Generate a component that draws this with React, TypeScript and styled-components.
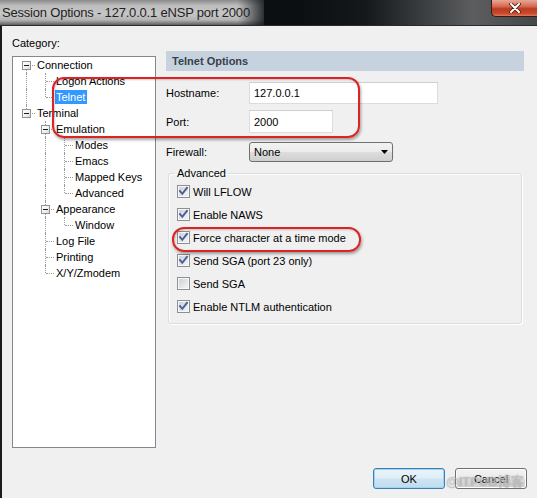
import React from "react";
import styled, { createGlobalStyle } from "styled-components";

const Global = createGlobalStyle`
  html, body { margin: 0; padding: 0; }
  body {
    width: 537px; height: 498px; overflow: hidden; background: #f0f0f0;
    font-family: "Liberation Sans", Arial, sans-serif;
  }
`;

const Window = styled.div`
  position: relative;
  width: 537px;
  height: 498px;
  display: flex;
  flex-direction: column;
  overflow: hidden;
`;

const TitleBar = styled.div`
  flex: none;
  height: 25px;
  display: flex;
  justify-content: space-between;
  align-items: stretch;
  background: linear-gradient(to right, #121519 0%, #0c0f12 55%, #15181b 68%, #3f4244 80%, #5b5d5f 88%, #45484a 100%);
  border-bottom: 1px solid #2b2b2b;
`;

const TitleText = styled.span`
  display: flex;
  align-items: center;
  padding: 0 14px 0 2px;
  font-size: 13px;
  letter-spacing: -0.2px;
  color: #1f2222;
  background:
    linear-gradient(to right, rgba(18,21,25,0) 0%, rgba(18,21,25,0) 90%, rgba(18,21,25,0.85) 100%),
    linear-gradient(to bottom, #8a8a8a 0%, #bdbdbd 22%, #c6c6c6 55%, #b4b4b4 80%, #5e5e5e 100%);
`;

const CloseButton = styled.div`
  width: 46px;
  height: 17px;
  box-sizing: border-box;
  display: flex;
  align-items: center;
  justify-content: center;
  border: 1px solid #3b1a12;
  border-top: none;
  border-right: none;
  border-radius: 0 0 0 5px;
  background: linear-gradient(to bottom, #e6a796 0%, #d56a50 40%, #bd3a20 55%, #c84a2e 85%, #e07a5a 100%);
`;

const Body = styled.div`
  flex: 1;
  display: flex;
  flex-direction: column;
  padding-left: 10px;
  border-left: 2px solid #1b1b1b;
  background: #f0f0f0;
  font-size: 11px;
  color: #000;
`;

const CategoryLabel = styled.div`
  margin-top: 10px;
  height: 14px;
  line-height: 14px;
`;

const MainRow = styled.div`
  display: flex;
  align-items: flex-start;
`;

const Tree = styled.div`
  margin-top: 6px;
  width: 144px;
  height: 392px;
  box-sizing: border-box;
  border: 1px solid #828790;
  background: #fff;
  padding-left: 4px;
`;

const TreeRow = styled.div`
  display: flex;
  align-items: center;
  height: 16px;
`;

const dots = "1px dotted #9a9a9a";

const Guide = styled.span<{ $line: boolean }>`
  position: relative;
  flex: none;
  width: 19px;
  height: 16px;
  &::before {
    content: "";
    display: ${(p) => (p.$line ? "block" : "none")};
    position: absolute;
    left: 9px;
    top: 0;
    bottom: 0;
    border-left: ${dots};
  }
`;

const Connector = styled.span<{ $up: boolean; $down: boolean }>`
  position: relative;
  flex: none;
  width: 19px;
  height: 16px;
  &::before {
    content: "";
    position: absolute;
    left: 9px;
    top: ${(p) => (p.$up ? 0 : 8)}px;
    bottom: ${(p) => (p.$down ? 0 : 8)}px;
    border-left: ${dots};
  }
  &::after {
    content: "";
    position: absolute;
    left: 10px;
    right: 1px;
    top: 8px;
    border-top: ${dots};
  }
`;

const Expander = styled.span`
  position: absolute;
  z-index: 1;
  left: 5px;
  top: 4px;
  width: 9px;
  height: 9px;
  box-sizing: border-box;
  border: 1px solid #919191;
  background: linear-gradient(135deg, #ffffff 0%, #f0f0f0 60%, #d8d8d8 100%);
  &::after {
    content: "";
    position: absolute;
    left: 1px;
    top: 3px;
    width: 5px;
    height: 1px;
    background: #1c1c1c;
  }
`;

const NodeLabel = styled.span<{ $selected?: boolean }>`
  height: 14px;
  line-height: 14px;
  padding: 0 2px 0 1px;
  white-space: nowrap;
  background: ${(p) => (p.$selected ? "#3399ff" : "transparent")};
  color: ${(p) => (p.$selected ? "#fff" : "#000")};
`;

const Panel = styled.div`
  margin: 1px 0 0 10px;
  width: 358px;
  display: flex;
  flex-direction: column;
`;

const PanelHeader = styled.div`
  height: 20px;
  line-height: 20px;
  padding-left: 6px;
  background: #c6d3df;
  color: #36404b;
  font-weight: bold;
`;

const FieldRow = styled.div<{ $gap: number }>`
  display: flex;
  align-items: center;
  margin-top: ${(p) => p.$gap}px;
`;

const FieldLabel = styled.span`
  width: 83px;
  flex: none;
`;

const TextBox = styled.input<{ $w: number; $h: number }>`
  width: ${(p) => p.$w}px;
  height: ${(p) => p.$h}px;
  box-sizing: border-box;
  margin: 0;
  padding: 0 0 0 4px;
  border: 1px solid #dcdcdc;
  border-top-color: #cfcfcf;
  background: #fff;
  font: 11px "Liberation Sans", Arial, sans-serif;
  color: #000;
  outline: none;
`;

const Combo = styled.div`
  width: 144px;
  height: 20px;
  box-sizing: border-box;
  display: flex;
  align-items: center;
  justify-content: space-between;
  padding: 0 4px 0 4px;
  border: 1px solid #707070;
  border-radius: 3px;
  background: linear-gradient(to bottom, #f2f2f2 0%, #ebebeb 48%, #dddddd 52%, #cfcfcf 100%);
`;

const GroupBox = styled.fieldset`
  margin: 4px 2px 0;
  padding: 0 8px 5px;
  min-width: 0;
  border: 1px solid #d5dfe5;
  border-radius: 3px;
  box-shadow: inset 1px 1px 0 #fff, 1px 1px 0 #fff;
`;

const Legend = styled.legend`
  padding: 0 2px;
  margin-left: -2px;
  height: 14px;
  line-height: 14px;
`;

const CheckRow = styled.div`
  display: flex;
  align-items: center;
  gap: 3px;
  height: 23px;
`;

const ButtonRow = styled.div`
  margin-top: 20px;
  display: flex;
  justify-content: flex-end;
  gap: 10px;
  padding-right: 10px;
`;

const Button = styled.div<{ $default?: boolean }>`
  width: 72px;
  height: 21px;
  box-sizing: border-box;
  display: flex;
  align-items: center;
  justify-content: center;
  border-radius: 3px;
  border: 1px solid ${(p) => (p.$default ? "#3c7fb1" : "#707070")};
  background: ${(p) =>
    p.$default
      ? "linear-gradient(to bottom, #eaf4fa 0%, #dfeef8 48%, #cfe4f2 52%, #c0dbee 100%)"
      : "linear-gradient(to bottom, #f2f2f2 0%, #ebebeb 48%, #dddddd 52%, #cfcfcf 100%)"};
  box-shadow: ${(p) => (p.$default ? "inset 0 0 0 1px #9fd6f5" : "inset 0 0 0 1px #fcfcfc")};
`;

const Annotation = styled.div<{ $x: number; $y: number; $w: number; $h: number; $r: number }>`
  position: absolute;
  left: ${(p) => p.$x}px;
  top: ${(p) => p.$y}px;
  width: ${(p) => p.$w}px;
  height: ${(p) => p.$h}px;
  box-sizing: border-box;
  border: 2px solid #dc2424;
  border-radius: ${(p) => p.$r}px;
  box-shadow: 1px 2px 3px rgba(0, 0, 0, 0.35), inset 1px 1px 2px rgba(0, 0, 0, 0.2);
  pointer-events: none;
`;

const Watermark = styled.div`
  position: absolute;
  left: 446px;
  top: 471px;
  font: bold 13px "Liberation Sans", "Noto Sans CJK SC", sans-serif;
  color: rgba(255, 255, 255, 0.35);
  text-shadow: 0 0 1px rgba(120, 120, 120, 0.7);
  white-space: nowrap;
  pointer-events: none;
`;

type TreeNode = {
  label: string;
  guides: boolean[];
  up: boolean;
  down: boolean;
  box?: boolean;
  selected?: boolean;
};

const treeNodes: TreeNode[] = [
  { label: "Connection", guides: [], up: false, down: true, box: true },
  { label: "Logon Actions", guides: [true], up: true, down: true },
  { label: "Telnet", guides: [true], up: true, down: false, selected: true },
  { label: "Terminal", guides: [], up: true, down: false, box: true },
  { label: "Emulation", guides: [false], up: true, down: true, box: true },
  { label: "Modes", guides: [false, true], up: true, down: true },
  { label: "Emacs", guides: [false, true], up: true, down: true },
  { label: "Mapped Keys", guides: [false, true], up: true, down: true },
  { label: "Advanced", guides: [false, true], up: true, down: false },
  { label: "Appearance", guides: [false], up: true, down: true, box: true },
  { label: "Window", guides: [false, true], up: true, down: false },
  { label: "Log File", guides: [false], up: true, down: true },
  { label: "Printing", guides: [false], up: true, down: true },
  { label: "X/Y/Zmodem", guides: [false], up: true, down: false },
];

const checks: { label: string; checked: boolean }[] = [
  { label: "Will LFLOW", checked: true },
  { label: "Enable NAWS", checked: true },
  { label: "Force character at a time mode", checked: true },
  { label: "Send SGA (port 23 only)", checked: true },
  { label: "Send SGA", checked: false },
  { label: "Enable NTLM authentication", checked: true },
];

const CheckBox = ({ checked }: { checked: boolean }) => (
  <svg width="13" height="13" viewBox="0 0 13 13">
    <defs>
      <linearGradient id="cbg" x1="0" y1="0" x2="1" y2="1">
        <stop offset="0" stopColor="#cbcfd5" />
        <stop offset="1" stopColor="#f7f7f7" />
      </linearGradient>
    </defs>
    <rect x="0.5" y="0.5" width="12" height="12" fill="#fff" stroke="#8e8f8f" />
    <rect x="2" y="2" width="9" height="9" fill="url(#cbg)" stroke="#e0e2e5" strokeWidth="0.5" />
    {checked && (
      <path d="M3 6.2 L5.3 8.8 L10 2.8" fill="none" stroke="#4a5f97" strokeWidth="1.9" strokeLinecap="square" strokeLinejoin="miter" />
    )}
  </svg>
);

export default function App() {
  return (
    <Window>
      <Global />
      <TitleBar>
        <TitleText>Session Options - 127.0.0.1 eNSP port 2000</TitleText>
        <CloseButton>
          <svg width="12" height="10" viewBox="0 0 12 10">
            <path d="M2 1 L10 9 M10 1 L2 9" stroke="#4a1a10" strokeWidth="3.6" strokeLinecap="round" />
            <path d="M2 1 L10 9 M10 1 L2 9" stroke="#ffffff" strokeWidth="2" strokeLinecap="round" />
          </svg>
        </CloseButton>
      </TitleBar>
      <Body>
        <CategoryLabel>Category:</CategoryLabel>
        <MainRow>
          <Tree>
            {treeNodes.map((n) => (
              <TreeRow key={n.label}>
                {n.guides.map((g, i) => (
                  <Guide key={i} $line={g} />
                ))}
                <Connector $up={n.up} $down={n.down}>
                  {n.box && <Expander />}
                </Connector>
                <NodeLabel $selected={n.selected}>{n.label}</NodeLabel>
              </TreeRow>
            ))}
          </Tree>
          <Panel>
            <PanelHeader>Telnet Options</PanelHeader>
            <FieldRow $gap={11}>
              <FieldLabel>Hostname:</FieldLabel>
              <TextBox $w={189} $h={22} readOnly value="127.0.0.1" />
            </FieldRow>
            <FieldRow $gap={6}>
              <FieldLabel>Port:</FieldLabel>
              <TextBox $w={84} $h={23} readOnly value="2000" />
            </FieldRow>
            <FieldRow $gap={9}>
              <FieldLabel>Firewall:</FieldLabel>
              <Combo>
                <span>None</span>
                <svg width="7" height="4" viewBox="0 0 7 4">
                  <polygon points="0,0 7,0 3.5,4" fill="#000" />
                </svg>
              </Combo>
            </FieldRow>
            <GroupBox>
              <Legend>Advanced</Legend>
              {checks.map((c) => (
                <CheckRow key={c.label}>
                  <CheckBox checked={c.checked} />
                  <span>{c.label}</span>
                </CheckRow>
              ))}
            </GroupBox>
          </Panel>
        </MainRow>
        <ButtonRow>
          <Button $default>OK</Button>
          <Button>Cancel</Button>
        </ButtonRow>
      </Body>
      <Annotation $x={52} $y={77} $w={308} $h={61} $r={12} />
      <Annotation $x={172} $y={227} $w={189} $h={25} $r={12} />
      <Watermark>@ITPUB博客</Watermark>
    </Window>
  );
}
